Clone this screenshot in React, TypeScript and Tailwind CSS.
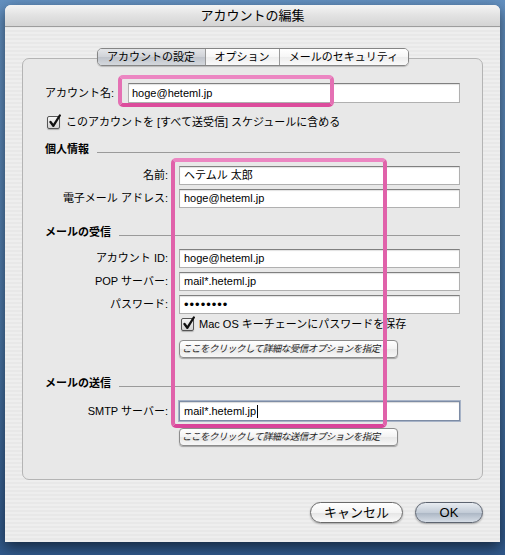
import React from "react";

const FONT = "font-['Liberation_Sans','Noto_Sans_CJK_JP',sans-serif]";

function Field({ children, focused }: { children: React.ReactNode; focused?: boolean }) {
  if (focused) {
    return (
      <div className="flex-1 h-[20px] flex items-center bg-white border border-[#7d8ca5] shadow-[0_0_0_1px_rgba(150,165,190,0.8),inset_0_1px_1px_rgba(0,0,0,0.15)] pl-[4px] text-[11px] leading-none text-black whitespace-nowrap">
        {children}
        <span className="inline-block w-px h-[13px] bg-black ml-[1px]" />
      </div>
    );
  }
  return (
    <div className="flex-1 h-[19px] flex items-center bg-white border border-[#b0b0b0] border-t-[#808080] shadow-[inset_0_1px_1px_rgba(0,0,0,0.12)] pl-[4px] text-[11px] leading-none text-black whitespace-nowrap">
      {children}
    </div>
  );
}

function Row({ label, children, focused }: { label: string; children: React.ReactNode; focused?: boolean }) {
  return (
    <div className="flex items-center">
      <div className="w-[123px] shrink-0 text-right text-[11px] leading-none text-black whitespace-nowrap">{label}</div>
      <div className="ml-[11px] flex-1 flex">
        <Field focused={focused}>{children}</Field>
      </div>
    </div>
  );
}

function Heading({ title }: { title: string }) {
  return (
    <div className="flex items-center h-[14px]">
      <span className="font-bold text-[11px] leading-none text-black whitespace-nowrap">{title}</span>
      <div className="ml-[8px] flex-1 mt-[6px] border-t border-[#9a9a9a]" />
    </div>
  );
}

function Check() {
  return (
    <div className="relative w-[13px] h-[13px] shrink-0 rounded-[2px] border border-[#555] bg-[linear-gradient(#f6f6f6,#d2d2d2)] shadow-[0_1px_1px_rgba(0,0,0,0.25)]">
      <svg className="absolute top-[-3px] left-[0px]" width="14" height="15" viewBox="0 0 14 15">
        <path d="M2.5 8 L5.3 11.8 L11.8 1.5" stroke="#111" strokeWidth="2.3" fill="none" strokeLinecap="round" strokeLinejoin="round" />
      </svg>
    </div>
  );
}

function SmallButton({ label }: { label: string }) {
  return (
    <div className="flex items-center">
      <div className="w-[123px] shrink-0" />
      <div className="ml-[11px] w-[219px] h-[18px] flex items-center pl-[2px] rounded-[4px] border border-[#8c8c8c] bg-[linear-gradient(#ffffff,#f3f3f3_50%,#e8e8e8_51%,#f7f7f7)] shadow-[0_1px_1px_rgba(0,0,0,0.3)] text-[9.5px] tracking-[-0.5px] leading-none italic text-[#222] whitespace-nowrap overflow-hidden">
        {label}
      </div>
    </div>
  );
}

export default function App() {
  return (
    <div className={`w-[505px] h-[555px] overflow-hidden bg-[linear-gradient(#6390c0,#4a77a8_60%,#30588a)] pl-[5px] pt-[5px] ${FONT}`}>
      <div className="w-[495px] h-[537px] flex flex-col rounded-t-[6px] overflow-hidden shadow-[0_5px_14px_rgba(0,0,0,0.55)] bg-[repeating-linear-gradient(0deg,#eeeeee_0px,#eeeeee_2px,#e8e8e8_2px,#e8e8e8_4px)]">
        {/* title bar */}
        <div className="h-[22px] shrink-0 flex items-center justify-center border-b border-[#9d9d9d] bg-[linear-gradient(#f4f4f4,#e2e2e2_50%,#d4d4d4)] text-[13px] leading-none text-black">
          アカウントの編集
        </div>

        {/* body */}
        <div className="flex-1 flex flex-col px-[17px]">
          {/* tabs */}
          <div className="relative z-10 mt-[21px] flex justify-center">
            <div className="flex h-[18px] rounded-[5px] border border-[#858585] overflow-hidden shadow-[0_1px_1px_rgba(0,0,0,0.2)] text-[11px] leading-none text-black">
              <div className="w-[107px] flex items-center justify-center bg-[linear-gradient(#e3e5e8,#cfd2d7_50%,#bfc3ca_51%,#d4d8dd)]">
                アカウントの設定
              </div>
              <div className="w-[74px] flex items-center justify-center border-l border-[#9a9a9a] bg-[linear-gradient(#ffffff,#f6f6f6_50%,#ececec_51%,#fafafa)]">
                オプション
              </div>
              <div className="w-[129px] flex items-center justify-center border-l border-[#9a9a9a] bg-[linear-gradient(#ffffff,#f6f6f6_50%,#ececec_51%,#fafafa)]">
                メールのセキュリティ
              </div>
            </div>
          </div>

          {/* group box */}
          <div className="relative -mt-[8px] h-[422px] rounded-[7px] border border-[#b4b4b4] bg-[#e8e8e8] px-[22px] flex flex-col">
            {/* account name */}
            <div className="mt-[24px] flex items-center">
              <div className="w-[69px] shrink-0 text-right text-[11px] leading-none text-black whitespace-nowrap flex justify-end">アカウント名:</div>
              <div className="ml-[14px] flex-1 flex">
                <div className="flex-1 h-[20px] flex items-center bg-white border border-[#b0b0b0] border-t-[#808080] shadow-[inset_0_1px_1px_rgba(0,0,0,0.12)] pl-[3px] text-[11px] leading-none text-black">
                  hoge@heteml.jp
                </div>
              </div>
            </div>

            {/* checkbox */}
            <div className="mt-[12px] h-[15px] flex items-center pl-[2px]">
              <Check />
              <span className="ml-[6px] text-[11px] leading-none text-black whitespace-nowrap">
                このアカウントを [すべて送受信] スケジュールに含める
              </span>
            </div>

            <div className="mt-[12px]">
              <Heading title="個人情報" />
            </div>
            <div className="mt-[10px]">
              <Row label="名前:">ヘテムル 太郎</Row>
            </div>
            <div className="mt-[4px]">
              <Row label="電子メール アドレス:">hoge@heteml.jp</Row>
            </div>

            <div className="mt-[17px]">
              <Heading title="メールの受信" />
            </div>
            <div className="mt-[10px]">
              <Row label="アカウント ID:">hoge@heteml.jp</Row>
            </div>
            <div className="mt-[4px]">
              <Row label="POP サーバー:">mail*.heteml.jp</Row>
            </div>
            <div className="mt-[4px]">
              <Row label="パスワード:">
                <span className="text-[13px] tracking-[1px] leading-none">••••••••</span>
              </Row>
            </div>
            <div className="mt-[3px] h-[14px] flex items-center">
              <div className="w-[123px] shrink-0" />
              <div className="ml-[13px] flex items-center">
                <Check />
                <span className="ml-[5px] text-[11px] leading-none text-black whitespace-nowrap">
                  Mac OS キーチェーンにパスワードを保存
                </span>
              </div>
            </div>
            <div className="mt-[9px]">
              <SmallButton label="ここをクリックして詳細な受信オプションを指定" />
            </div>

            <div className="mt-[18px]">
              <Heading title="メールの送信" />
            </div>
            <div className="mt-[11px]">
              <Row label="SMTP サーバー:" focused>
                mail*.heteml.jp
              </Row>
            </div>
            <div className="mt-[7px]">
              <SmallButton label="ここをクリックして詳細な送信オプションを指定" />
            </div>

            {/* highlight overlays */}
            <div className="absolute left-[95px] top-[16px] w-[216px] h-[32px] rounded-[5px] border-[4px] border-t-[#ec86c2] border-x-[#e470b3] border-b-[#dc4c9c] pointer-events-none" />
            <div className="absolute left-[148px] top-[99px] w-[216px] h-[270px] rounded-[5px] border-[4px] border-t-[#ec86c2] border-x-[#e062aa] border-b-[#d9449a] pointer-events-none" />
          </div>

          {/* bottom buttons */}
          <div className="mt-[22px] flex justify-end gap-[12px]">
            <div className="w-[93px] h-[21px] rounded-full border border-[#6a6a6a] bg-[linear-gradient(#ffffff,#f4f4f4_50%,#e4e4e4_51%,#fbfbfb)] shadow-[0_1px_2px_rgba(0,0,0,0.3)] flex items-center justify-center text-[13px] leading-none text-black">
              キャンセル
            </div>
            <div className="w-[68px] h-[21px] rounded-full border border-[#5d6470] bg-[linear-gradient(#e8ecf1,#c3ccd7_50%,#aab5c3_51%,#d6dde6)] shadow-[0_1px_2px_rgba(0,0,0,0.3)] flex items-center justify-center text-[13px] leading-none text-black">
              OK
            </div>
          </div>
        </div>
      </div>
    </div>
  );
}
